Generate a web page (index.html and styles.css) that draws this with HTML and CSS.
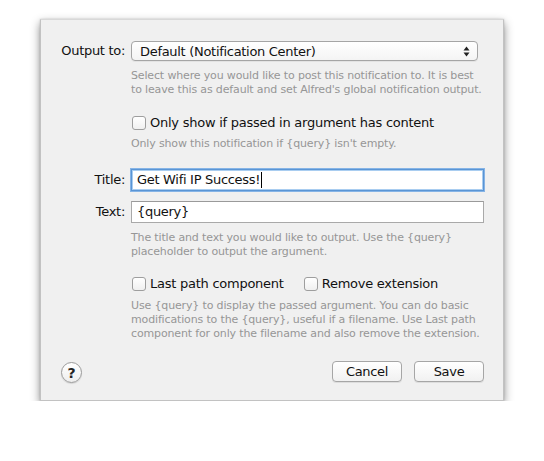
FILE: index.html
```html
<!DOCTYPE html>
<html>
<head>
<meta charset="utf-8">
<link rel="stylesheet" href="styles.css">
</head>
<body>
<div class="sheet">
  <div class="grid">
    <div class="label label-popup">Output to:</div>
    <div class="popup">
      <span>Default (Notification Center)</span>
      <svg class="stepper" width="7" height="11" viewBox="0 0 7 11"><path d="M3.5 0.5 L6.5 4.5 L0.5 4.5 Z" fill="#222"/><path d="M3.5 10.5 L6.5 6.5 L0.5 6.5 Z" fill="#222"/></svg>
    </div>
    <div></div>
    <p class="help help-1">Select where you would like to post this notification to. It is best to leave this as default and set Alfred's global notification output.</p>
    <div></div>
    <label class="check check-1"><span class="box"></span>Only show if passed in argument has content</label>
    <div></div>
    <p class="help help-2">Only show this notification if {query} isn't empty.</p>
    <div class="label label-title">Title:</div>
    <div class="field field-title focused">Get Wifi IP Success!<span class="caret"></span></div>
    <div class="label label-text">Text:</div>
    <div class="field field-text">{query}</div>
    <div></div>
    <p class="help help-3">The title and text you would like to output. Use the {query} placeholder to output the argument.</p>
    <div></div>
    <div class="check-row">
      <label class="check"><span class="box"></span>Last path component</label>
      <label class="check"><span class="box"></span>Remove extension</label>
    </div>
    <div></div>
    <p class="help help-4">Use {query} to display the passed argument. You can do basic modifications to the {query}, useful if a filename. Use Last path component for only the filename and also remove the extension.</p>
  </div>
  <div class="footer">
    <button class="help-btn">?</button>
    <div class="buttons">
      <button class="btn">Cancel</button>
      <button class="btn">Save</button>
    </div>
  </div>
</div>
</body>
</html>
```
FILE: styles.css
```css
html, body {
  margin: 0;
  padding: 0;
  background: #ffffff;
}
body {
  font-family: "DejaVu Sans", "Liberation Sans", sans-serif;
  font-size: 13px;
  color: #111;
}
.sheet {
  box-sizing: border-box;
  margin: 19px 0 0 40px;
  width: 464px;
  height: 382px;
  background: #f0f0f0;
  border: 1px solid #c2c2c2;
  border-top-color: #d8d8d8;
  box-shadow: 0 4px 9px rgba(0, 0, 0, 0.45), 0 0 2px rgba(0, 0, 0, 0.15);
  padding: 21px 19px 0 19px;
}
.grid {
  display: grid;
  grid-template-columns: 65px 353px;
  column-gap: 6px;
  align-items: start;
}
.label {
  text-align: right;
  font-size: 13px;
  letter-spacing: -0.3px;
}
.label-popup { line-height: 20px; }
.label-title { line-height: 22px; margin-top: 18px; }
.label-text { line-height: 22px; margin-top: 10px; }
.popup {
  box-sizing: border-box;
  width: 347px;
  height: 20px;
  border: 1px solid #a5a5a5;
  border-radius: 4px;
  background: linear-gradient(#ffffff, #f4f4f4);
  display: flex;
  align-items: center;
  justify-content: space-between;
  padding: 0 7px 0 8px;
  font-size: 13px;
  letter-spacing: -0.3px;
  box-shadow: 0 1px 0 rgba(0,0,0,0.05);
}
.stepper { display: block; }
.help {
  margin: 0;
  font-size: 11px;
  line-height: 14px;
  color: #969696;
  letter-spacing: -0.15px;
}
.help-1 { margin-top: 8px; }
.help-2 { margin-top: 6px; }
.help-3 { margin-top: 8px; }
.help-4 { margin-top: 7px; }
.check {
  display: flex;
  align-items: center;
  font-size: 13px;
  line-height: 16px;
  letter-spacing: -0.25px;
}
.check-1 { margin-top: 18px; }
.box {
  box-sizing: border-box;
  width: 14px;
  height: 14px;
  margin: 0 4px 0 1px;
  border: 1px solid #9e9e9e;
  border-radius: 3px;
  background: linear-gradient(#ffffff, #f0f0f0);
}
.check-row {
  display: flex;
  gap: 19px;
  margin-top: 17px;
}
.field {
  box-sizing: border-box;
  height: 22px;
  background: #fff;
  border: 1px solid #a9a9a9;
  border-top-color: #9a9a9a;
  padding: 0 5px;
  line-height: 20px;
  font-size: 13px;
  letter-spacing: -0.3px;
  display: flex;
  align-items: center;
}
.field-title { margin-top: 18px; }
.field-text { margin-top: 10px; }
.focused {
  border: 1px solid #5a95d5;
  box-shadow: 0 0 0 1px #86b4e6, inset 0 0 0 1px #a9cdf0;
}
.caret {
  display: inline-block;
  width: 1px;
  height: 16px;
  background: #000;
  margin-left: 1px;
}
.footer {
  display: flex;
  justify-content: space-between;
  align-items: center;
  margin-top: 19px;
  padding-left: 1px;
}
.help-btn {
  box-sizing: border-box;
  width: 21px;
  height: 21px;
  border-radius: 50%;
  border: 1px solid #9b9b9b;
  background: linear-gradient(#ffffff, #eeeeee);
  font-family: "DejaVu Sans", sans-serif;
  font-size: 14px;
  font-weight: bold;
  color: #222;
  padding: 0;
  margin-top: 2px;
  box-shadow: 0 1px 1px rgba(0,0,0,0.12);
}
.buttons {
  display: flex;
  gap: 12px;
}
.btn {
  box-sizing: border-box;
  width: 70px;
  height: 21px;
  border: 1px solid #a6a6a6;
  border-radius: 4px;
  background: linear-gradient(#ffffff, #f1f1f1);
  font-family: "DejaVu Sans", sans-serif;
  font-size: 13px;
  letter-spacing: -0.3px;
  color: #111;
  padding: 0;
  box-shadow: 0 1px 0 rgba(0,0,0,0.08);
}
```
